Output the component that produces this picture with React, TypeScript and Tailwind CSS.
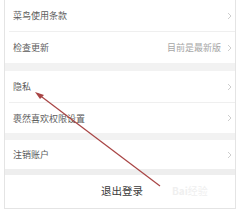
import React from "react";

const font = { fontFamily: '"Noto Sans CJK SC", "Noto Sans", sans-serif' };

function Row({ label, value, h }: { label: string; value?: string; h: string }) {
  return (
    <div className={`flex items-center justify-between pl-[8px] pr-[3px] ${h}`}>
      <span className="text-[9px] leading-none text-[#5c5c5c]">{label}</span>
      <div className="flex items-center gap-[6px]">
        {value && <span className="text-[9px] leading-none text-[#a6a6a6]">{value}</span>}
        <svg width="5" height="8" viewBox="0 0 5 8">
          <path d="M1 1 L4 4 L1 7" fill="none" stroke="#c8c8c8" strokeWidth="0.9" />
        </svg>
      </div>
    </div>
  );
}

export default function App() {
  return (
    <div className="relative w-[240px] h-[210px] bg-white overflow-hidden" style={font}>
      <div className="mx-[4px] h-[209px] border-x border-b border-[#e4e4e4] flex flex-col">
        <Row label="菜鸟使用条款" h="h-[31px]" />
        <div className="ml-[4px] h-px bg-[#efefef]" />
        <Row label="检查更新" value="目前是最新版" h="h-[31px]" />
        <div className="h-[8px] bg-[#f2f2f2]" />
        <Row label="隐私" h="h-[31px]" />
        <div className="ml-[4px] h-px bg-[#efefef]" />
        <Row label="裹然喜欢权限设置" h="h-[30px]" />
        <div className="h-[7px] bg-[#f2f2f2]" />
        <Row label="注销账户" h="h-[29px]" />
        <div className="h-[6px] bg-[#eeeeee]" />
        <div className="flex-1 flex items-center justify-center">
          <span className="text-[10.5px] leading-none text-[#3a3a3a] ml-[4px]">退出登录</span>
        </div>
      </div>
      <div className="absolute left-[172px] top-[186px] text-[10px] leading-none text-[#efefef] font-bold">
        Bai<span className="font-normal">经验</span>
      </div>
      <svg className="absolute left-0 top-0" width="240" height="210" viewBox="0 0 240 210">
        <line x1="160" y1="186" x2="38" y2="94" stroke="#a84444" strokeWidth="1.2" />
        <path d="M35 92 L44 95 L40 99 Z" fill="#a84444" />
      </svg>
    </div>
  );
}
